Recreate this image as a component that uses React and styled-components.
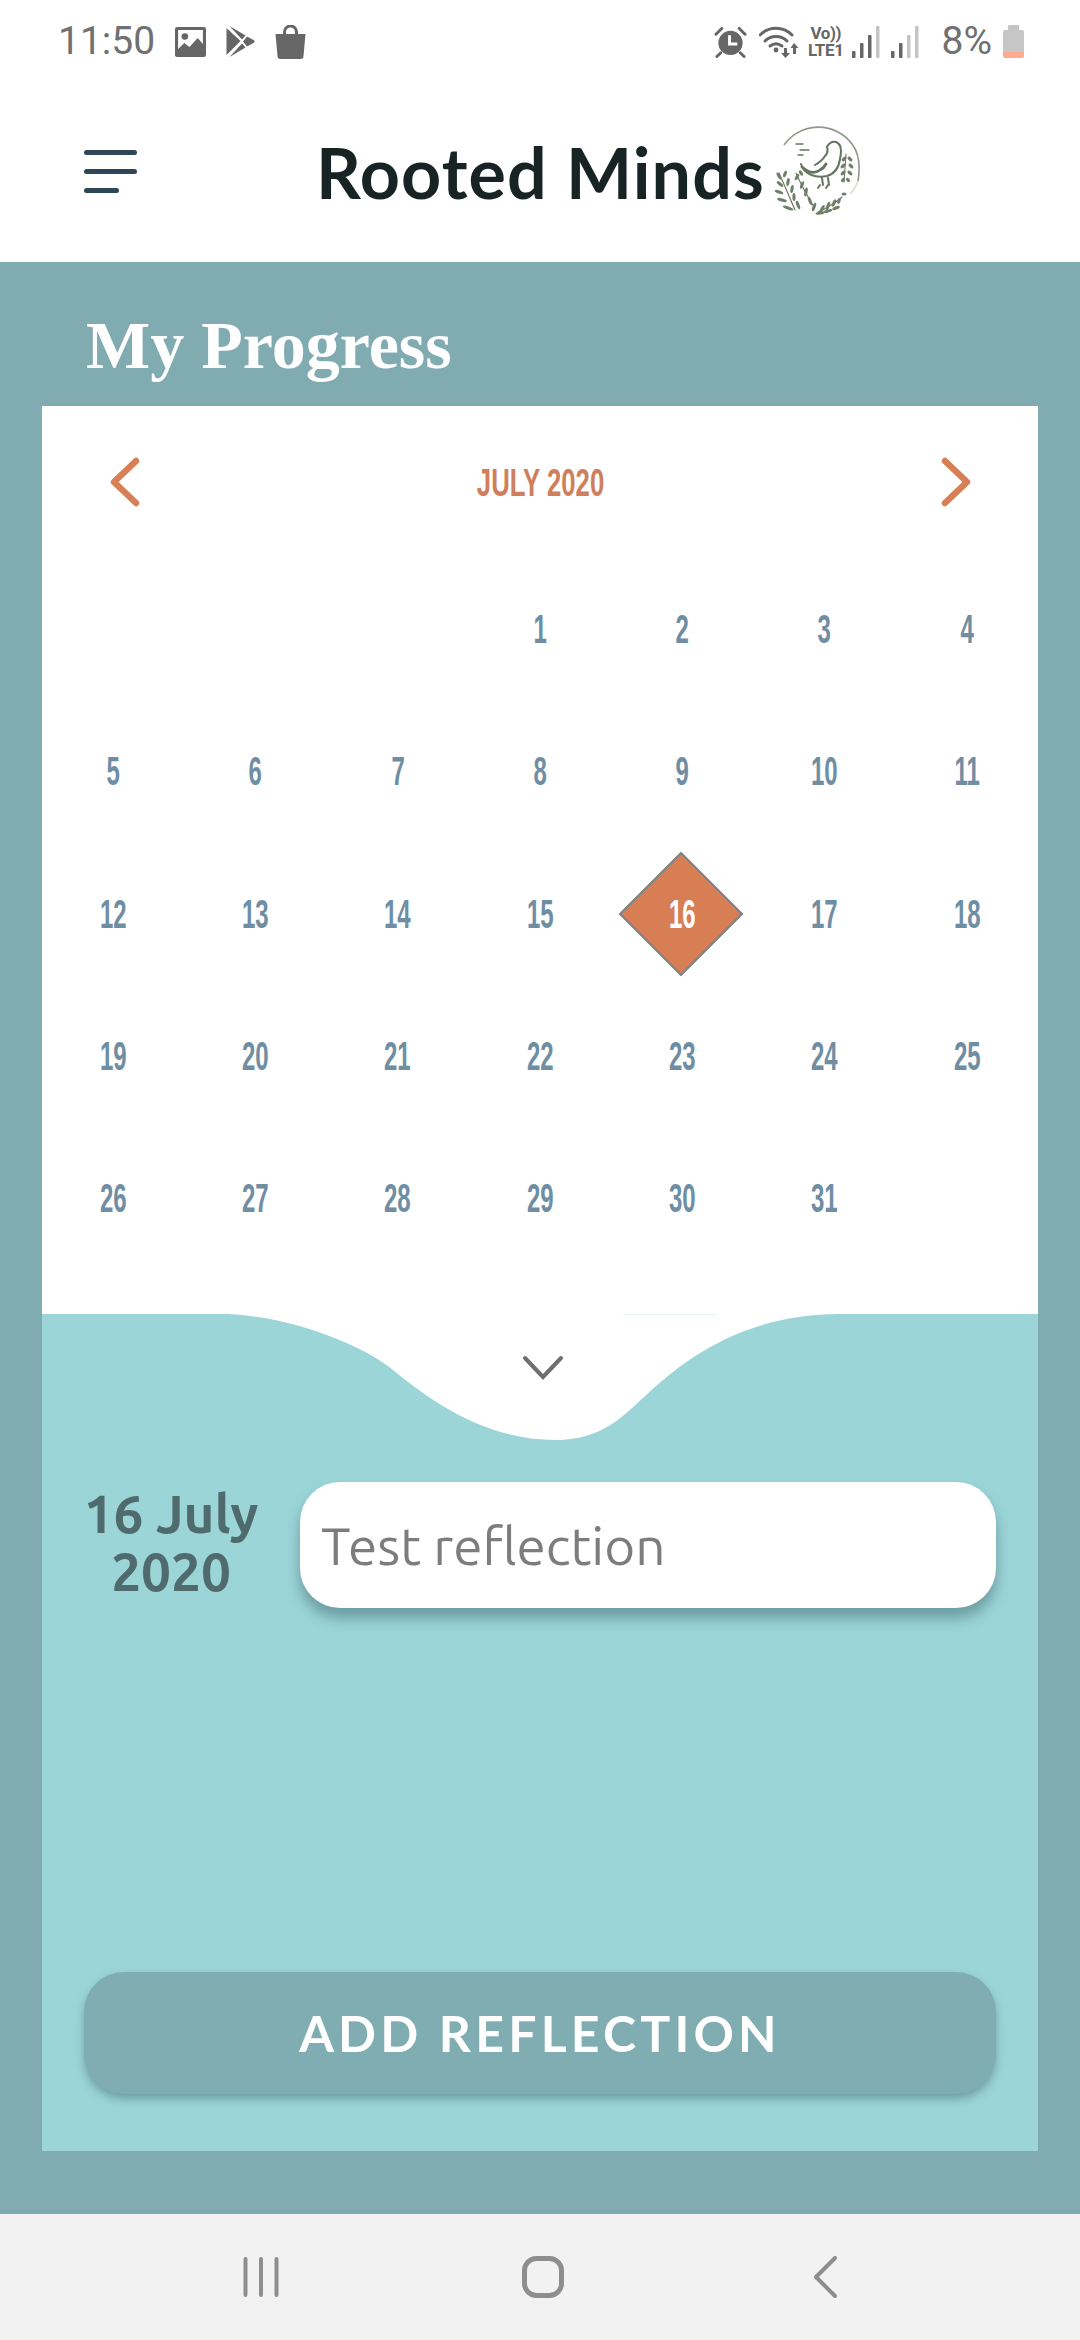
import React from "react";
import styled, { createGlobalStyle } from "styled-components";

const Global = createGlobalStyle`
  html, body { margin: 0; padding: 0; background: #80acb1; }
  * { box-sizing: border-box; }
`;

const Page = styled.div`
  width: 1080px; height: 2340px; display: flex; flex-direction: column; background: #80acb1; overflow: hidden;
`;
const StatusBar = styled.div`
  height: 80px; background: #fff; display: flex; align-items: center; padding: 3px 56px 0 58px; color: #6a6a6a;
  font-family: Roboto, sans-serif;
`;
const Time = styled.span` font-size: 39px; margin-right: 20px; line-height: 1; color: #707070; `;
const StatusLeft = styled.div` display: flex; align-items: center; gap: 20px; `;
const StatusRight = styled.div` margin-left: auto; display: flex; align-items: center; `;
const Percent = styled.span` font-size: 39px; line-height: 1; margin: 0 11px 0 12px; color: #707070; `;
const Volte = styled.div`
  display: flex; flex-direction: column; align-items: center; font-size: 17px; font-weight: 700; line-height: 17px;
  margin: 0 8px; color: #666; letter-spacing: -0.4px;
`;
const Header = styled.header`
  height: 182px; background: #fff; display: flex; align-items: center; padding-left: 84px;
`;
const Burger = styled.div` width: 53px; display: flex; flex-direction: column; gap: 14px; margin-right: 179px; `;
const BurgerBar = styled.span`
  display: block; height: 5px; border-radius: 3px; background: #2e4757; width: ${p => p.$w}px;
`;
const Brand = styled.div`
  font-family: Lato, sans-serif; font-weight: 700; font-size: 70px; color: #172423; line-height: 1; white-space: nowrap;
  letter-spacing: 1.1px; margin-top: 2px;
`;
const Logo = styled.svg` margin-left: 7px; margin-top: -2px; flex: none; `;
const PageTitle = styled.h1`
  height: 144px; margin: 0; padding: 43px 0 0 86px; font-family: "Liberation Serif", serif; font-weight: 700;
  font-size: 68px; line-height: 80px; color: #fff;
`;
const Card = styled.main`
  flex: none; height: 1745px; margin: 0 42px; display: flex; flex-direction: column; background: #9bd5d8;
`;
const Calendar = styled.section` height: 908px; background: #fff; `;
const MonthBar = styled.div`
  height: 152px; display: flex; align-items: center; justify-content: space-between; padding: 0 67px 0 68px;
`;
const Month = styled.span`
  display: inline-block; font-family: "Liberation Sans", sans-serif; font-size: 39px; line-height: 1; font-weight: 700;
  color: #d07f5c; transform: scaleX(0.66); white-space: nowrap;
`;
const Grid = styled.div`
  display: grid; grid-template-columns: repeat(7, 1fr); grid-auto-rows: 142.3px;
`;
const Cell = styled.div` position: relative; display: flex; align-items: center; justify-content: center; `;
const Diamond = styled.div`
  position: absolute; left: 50%; top: 50%; width: 88px; height: 88px; margin: -44px 0 0 -45px;
  background: #d87e55; border: 2.5px solid #78858b; transform: rotate(45deg);
`;
const Day = styled.span`
  position: relative; display: inline-block; font-family: "Liberation Sans", sans-serif; font-size: 40px; line-height: 1;
  font-weight: 700; color: ${p => (p.$active ? "#fff" : "#6f8ea4")}; transform: scaleX(0.6);
`;
const Panel = styled.section` flex: 1; display: flex; flex-direction: column; position: relative; `;
const Wave = styled.svg` display: block; flex: none; `;
const Reflection = styled.div` display: flex; align-items: flex-start; margin-top: 42px; padding-right: 42px; `;
const DateText = styled.div`
  width: 258px; text-align: center; font-family: "Ubuntu", "Noto Sans", sans-serif; font-weight: 700; font-size: 53px;
  line-height: 58px; color: #4f6b6e; padding-top: 3px;
`;
const Note = styled.div`
  flex: 1; height: 126px; border-radius: 40px; background: #fff; box-shadow: 0 10px 14px rgba(70, 110, 115, 0.55);
  font-family: "Ubuntu", "Noto Sans", sans-serif; font-size: 53px; line-height: 1; color: #7d7d7d; padding: 37px 0 0 21px;
`;
const AddButton = styled.button`
  margin: auto 42px 57px; height: 122px; border: 0; border-radius: 40px; background: #7fadb1;
  box-shadow: 0 5px 8px rgba(70, 110, 115, 0.5); color: #fff; font-family: Lato, sans-serif; font-weight: 700;
  font-size: 50px; letter-spacing: 4.2px; padding: 0;
`;
const NavBar = styled.nav`
  margin-top: auto; height: 126px; background: #f2f2f2; display: flex; align-items: center; justify-content: center;
  padding-left: 6px;
`;
const NavSlot = styled.div` width: 282px; display: flex; justify-content: center; `;

const ImageIcon = () => (
  <svg width="31" height="30" viewBox="0 0 30 30" preserveAspectRatio="none">
    <path fill="#666" fillRule="evenodd" d="M2 0h26a2 2 0 0 1 2 2v26a2 2 0 0 1-2 2H2a2 2 0 0 1-2-2V2a2 2 0 0 1 2-2zM3 3v19l6-6 5 4 8-9 5 6V3z" />
    <circle cx="9.5" cy="9.5" r="3.2" fill="#666" />
  </svg>
);
const PlayIcon = () => (
  <svg width="29" height="31" viewBox="0 0 28 31">
    <path fill="#666" d="M0 2 14 15 0 29z" />
    <path fill="#666" d="M3 0 19 9.5 15.5 13.5z" />
    <path fill="#666" d="M3 31 19 21.5 15.5 17.5z" />
    <path fill="#666" d="M20.5 10.5 27 14a1.6 1.6 0 0 1 0 3l-6.5 3.5-4-5z" />
  </svg>
);
const BagIcon = () => (
  <svg width="31" height="34" viewBox="0 0 30 34">
    <path fill="#666" d="M0 9h30l-2 22a3 3 0 0 1-3 3H5a3 3 0 0 1-3-3z" />
    <path fill="none" stroke="#666" strokeWidth="3" d="M9 10V7a6 6 0 0 1 12 0v3" />
  </svg>
);
const AlarmIcon = () => (
  <svg width="33" height="32" viewBox="0 0 34 32" style={{ marginRight: 12 }}>
    <circle cx="17" cy="17" r="12.5" fill="#666" />
    <path d="M16 9v9h8" fill="none" stroke="#fff" strokeWidth="3" />
    <path d="M2 8 8 2M32 8 26 2M7 27 3 31M27 27l4 4" stroke="#666" strokeWidth="3" strokeLinecap="round" />
  </svg>
);
const WifiIcon = () => (
  <svg width="41" height="32" viewBox="0 0 41 32">
    <g fill="none" stroke="#666" strokeWidth="3" strokeLinecap="round">
      <path d="M1 9C10 0 24 0 33 9" />
      <path d="M6 15C12 9 22 9 28 15" />
      <path d="M11 20c4-3 8-3 12 0" />
    </g>
    <circle cx="17" cy="24" r="2.4" fill="#666" />
    <path fill="#666" d="M25 22h3v5h3l-4.500 5-4.500-5h3zM35 17l4.500 5H37v6h-3v-6h-2.500z" />
  </svg>
);
const SignalIcon = ({ strong }) => (
  <svg width="28" height="32" viewBox="0 0 28 32" style={{ marginRight: 11 }}>
    <rect x="0" y="25" width="3.500" height="7" rx="1" fill="#666" />
    <rect x="8" y="17" width="3.500" height="15" rx="1" fill="#666" />
    <rect x="16" y="9" width="3.500" height="23" rx="1" fill={strong ? "#666" : "#c4c4c4"} />
    <rect x="24" y="0" width="3.500" height="32" rx="1" fill="#c4c4c4" />
  </svg>
);
const BatteryIcon = () => (
  <svg width="21" height="33" viewBox="0 0 21 33">
    <rect x="5" y="0" width="11" height="6" rx="1" fill="#c6c6c6" />
    <path fill="#c6c6c6" d="M2 5h17a2 2 0 0 1 2 2v20H0V7a2 2 0 0 1 2-2z" />
    <path fill="#ffa98f" d="M0 27h21v4a2 2 0 0 1-2 2H2a2 2 0 0 1-2-2z" />
  </svg>
);

const leaf = (x, y, a, l = 9) => (
  <ellipse key={`${x}-${y}-${a}`} cx={x} cy={y} rx={l / 2} ry={1.6} transform={`rotate(${a} ${x} ${y})`} fill="#6f7f68" />
);
const leaves = [
  [27, 79, 60, 8], [33, 77, 110, 7], [28, 87, 40, 8], [36, 85, 100, 8], [27, 95, 20, 9], [40, 92, 100, 8],
  [30, 103, 15, 10], [42, 100, 90, 8], [36, 111, 20, 11], [46, 108, 70, 9], [45, 80, 120, 7], [49, 76, 60, 6],
  [50, 88, 110, 8], [54, 95, 100, 9], [58, 104, 70, 9], [62, 110, 110, 9], [70, 112, -60, 9], [76, 109, -70, 9],
  [82, 106, -70, 8], [87, 104, -70, 6], [68, 116, -10, 9], [76, 114, -15, 9], [84, 111, -20, 8], [92, 97, 0, 5],
  [92, 62, -45, 6], [98, 62, 45, 6], [91, 69, -45, 6], [99, 69, 45, 6], [91, 76, -45, 6], [98, 76, 45, 6],
  [91, 83, -45, 5], [96, 83, 45, 5],
];
const LogoMark = () => (
  <Logo width="90" height="92" viewBox="20 27 90 92">
    <path d="M32 48A42 42 0 0 1 100 47Q110 60 106 84" fill="none" stroke="#8f998b" strokeWidth="1.600" />
    <path d="M106 84Q103 92 98 97" fill="none" stroke="#d8dcd6" strokeWidth="1.500" />
    <g fill="none" stroke="#66755f" strokeWidth="2" strokeLinecap="round">
      <path d="M75 50q3-6 9-5 5 2 5 9 0 3-1 8-2 14-13 17-14 3-23-6-2-3-3-6" />
      <path d="M75 50q2 5-2 9-3 5-10 9" />
      <path d="M50 70q10 9 18 3 4-2 6-6" strokeWidth="2.800" />
      <path d="M44 47h7M48 53h9M46 58h5" strokeWidth="1.300" />
      <path d="M70 81l1 7M76 81l1 7M66 91l2-3M74 91l2-3" />
      <path d="M27 76q8 18 16 37M90 100q-12 10-24 15M94 57q-1 14-2 28M44 76q6 14 18 34" strokeWidth="1.100" />
    </g>
    {leaves.map(([x, y, a, l]) => leaf(x, y, a, l))}
  </Logo>
);
const Chevron = ({ d }) => (
  <svg width="30" height="50" viewBox="0 0 30 50">
    <path d={d} fill="none" stroke="#d77f55" strokeWidth="6.500" strokeLinecap="round" strokeLinejoin="round" />
  </svg>
);

const weeks = [null, null, null, 1, 2, 3, 4, 5, 6, 7, 8, 9, 10, 11, 12, 13, 14, 15, 16, 17, 18, 19, 20, 21, 22, 23, 24, 25, 26, 27, 28, 29, 30, 31];

export default function App() {
  return (
    <Page>
      <Global />
      <StatusBar>
        <Time>11:50</Time>
        <StatusLeft>
          <ImageIcon />
          <PlayIcon />
          <BagIcon />
        </StatusLeft>
        <StatusRight>
          <AlarmIcon />
          <WifiIcon />
          <Volte>
            <span>Vo))</span>
            <span>LTE1</span>
          </Volte>
          <SignalIcon strong />
          <SignalIcon />
          <Percent>8%</Percent>
          <BatteryIcon />
        </StatusRight>
      </StatusBar>
      <Header>
        <Burger>
          <BurgerBar $w={53} />
          <BurgerBar $w={53} />
          <BurgerBar $w={35} />
        </Burger>
        <Brand>Rooted Minds</Brand>
        <LogoMark />
      </Header>
      <PageTitle>My Progress</PageTitle>
      <Card>
        <Calendar>
          <MonthBar>
            <Chevron d="M26 4 4 25l22 21" />
            <Month>JULY 2020</Month>
            <Chevron d="M4 4l22 21L4 46" />
          </MonthBar>
          <Grid>
            {weeks.map((d, i) => (
              <Cell key={i}>
                {d === 16 && <Diamond />}
                {d && <Day $active={d === 16}>{d}</Day>}
              </Cell>
            ))}
          </Grid>
        </Calendar>
        <Panel>
          <Wave width="996" height="126" viewBox="1 0 996 126">
            <path fill="#fff" d="M187 0C252 3 317 30 347 52C387 85 442 126 515 126C562 126 584 100 602 84C642 46 702 0 799 0Z" />
            <path d="M582 0.500h93" stroke="#e4f3f3" strokeWidth="1" />
            <path d="M484 44l18 19 18-19" fill="none" stroke="#6f6f6f" strokeWidth="4" strokeLinecap="round" strokeLinejoin="miter" />
          </Wave>
          <Reflection>
            <DateText>16 July<br />2020</DateText>
            <Note>Test reflection</Note>
          </Reflection>
          <AddButton>ADD REFLECTION</AddButton>
        </Panel>
      </Card>
      <NavBar>
        <NavSlot>
          <svg width="36" height="40" viewBox="0 0 36 40">
            <path d="M2.500 2v36M18 2v36M33.500 2v36" stroke="#8e8e8e" strokeWidth="4" strokeLinecap="round" />
          </svg>
        </NavSlot>
        <NavSlot>
          <svg width="42" height="42" viewBox="0 0 42 42">
            <rect x="2.500" y="2.500" width="37" height="37" rx="12" fill="none" stroke="#8e8e8e" strokeWidth="5" />
          </svg>
        </NavSlot>
        <NavSlot>
          <svg width="24" height="42" viewBox="0 0 24 42">
            <path d="M22 2 3 21l19 19" fill="none" stroke="#8e8e8e" strokeWidth="4" strokeLinecap="round" strokeLinejoin="round" />
          </svg>
        </NavSlot>
      </NavBar>
    </Page>
  );
}
